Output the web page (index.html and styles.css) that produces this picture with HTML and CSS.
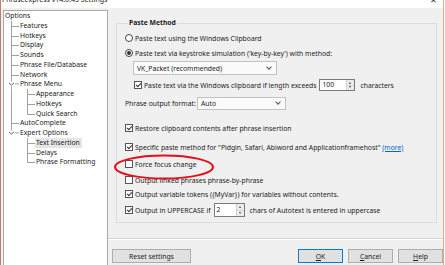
FILE: index.html
```html
<!DOCTYPE html>
<html lang="en">
  <head>
    <meta charset="UTF-8" />
    <title>PhraseExpress v14.0.45 Settings</title>
    <link rel="stylesheet" href="styles.css">
  </head>

  <body>
    <div class="window">
      <div class="titlebar">
        <span class="title">PhraseExpress v14.0.45 Settings</span>
        <span class="close">&#x2715;</span>
      </div>

      <div class="main">
        <div class="tree">
          <div class="node root">Options</div>
          <div class="node"><i class="g tee"></i>Features</div>
          <div class="node"><i class="g tee"></i>Hotkeys</div>
          <div class="node"><i class="g tee"></i>Display</div>
          <div class="node"><i class="g tee"></i>Sounds</div>
          <div class="node"><i class="g tee"></i>Phrase File/Database</div>
          <div class="node"><i class="g tee"></i>Network</div>
          <div class="node">
            <svg class="g" viewBox="0 0 16 10" preserveAspectRatio="none">
              <path d="M7.5 0V2.5M7.5 7.5V10M11 5H15" stroke="#a0a0a0" stroke-width="1" />
              <path d="M5 4L7.5 6.3L10 4" stroke="#4a4a4a" stroke-width="0.9" fill="none" />
            </svg>Phrase Menu
          </div>
          <div class="node"><i class="g pipe"></i><i class="g tee"></i>Appearance</div>
          <div class="node"><i class="g pipe"></i><i class="g tee"></i>Hotkeys</div>
          <div class="node"><i class="g pipe"></i><i class="g elbow"></i>Quick Search</div>
          <div class="node"><i class="g tee"></i>AutoComplete</div>
          <div class="node">
            <svg class="g" viewBox="0 0 16 10" preserveAspectRatio="none">
              <path d="M7.5 0V2.5M11 5H15" stroke="#a0a0a0" stroke-width="1" />
              <path d="M5 4L7.5 6.3L10 4" stroke="#4a4a4a" stroke-width="0.9" fill="none" />
            </svg>Expert Options
          </div>
          <div class="node"><i class="g"></i><i class="g tee"></i><span class="selected">Text Insertion</span></div>
          <div class="node"><i class="g"></i><i class="g tee"></i>Delays</div>
          <div class="node"><i class="g"></i><i class="g elbow"></i>Phrase Formatting</div>
        </div>

        <div class="pane">
          <fieldset class="group">
            <legend>Paste Method</legend>

            <div class="row first"><span class="radio"></span>Paste text using the Windows Clipboard</div>
            <div class="row gap3"><span class="radio on"></span>Paste text via keystroke simulation ('key-by-key') with method:</div>
            <div class="combo wide">VK_Packet (recommended)<span class="chev"></span></div>
            <div class="row gap4 indent">
              <span class="check on"></span>Paste text via the Windows clipboard if length exceeds
              <span class="spin long"><span class="spin-edit">100</span><span class="spin-btn"></span></span>
              <span class="after">characters</span>
            </div>
            <div class="row gap5 tall">
              <span class="label">Phrase output format:</span>
              <div class="combo narrow">Auto<span class="chev"></span></div>
            </div>
            <div class="row gap12"><span class="check on"></span>Restore clipboard contents after phrase insertion</div>
            <div class="row gap7"><span class="check on"></span>Specific paste method for "Pidgin, Safari, Abiword and Applicationframehost"&nbsp;<a href="#">(more)</a></div>
            <div class="row gap5"><span class="check"></span>Force focus change</div>
            <div class="row gap4"><span class="check"></span>Output linked phrases phrase-by-phrase</div>
            <div class="row gap2"><span class="check on"></span>Output variable tokens ({MyVar}) for variables without contents.</div>
            <div class="row gap3 tall">
              <span class="check on"></span>Output in UPPERCASE if
              <span class="spin short"><span class="spin-edit">2</span><span class="spin-btn"></span></span>
              <span class="after">chars of Autotext is entered in uppercase</span>
            </div>

            <svg class="mark" width="104" height="30" viewBox="0 0 104 30">
              <ellipse cx="52" cy="14" rx="49" ry="11.5" fill="none" stroke="#e3101c" stroke-width="2" />
            </svg>
          </fieldset>

          <div class="sep"></div>

          <div class="buttons">
            <button class="btn reset">Reset settings</button>
            <div class="btn-group">
              <button class="btn default"><u>O</u>K</button>
              <button class="btn"><u>C</u>ancel</button>
              <button class="btn"><u>H</u>elp</button>
            </div>
          </div>
        </div>
      </div>
    </div>
  </body>
</html>
```

FILE: styles.css
```css
body {
  margin: 0;
  font-family: "Noto Sans", sans-serif;
  font-size: 6.8px;
  color: #1b1b1b;
  background: #fff;
  overflow: hidden;
}

.window {
  width: 444px;
  height: 265px;
  box-sizing: border-box;
  border-left: 1px solid #b9806a;
  border-right: 1px solid #e6a888;
  background: #f0f0f0;
  display: flex;
  flex-direction: column;
}

.titlebar {
  height: 8px;
  flex: none;
  background: #fff;
  display: flex;
  justify-content: space-between;
  overflow: hidden;
}

.title {
  margin-top: -5px;
  padding-left: 1px;
  font-size: 7px;
  line-height: 10px;
}

.close {
  margin-top: -5px;
  margin-right: 6px;
  font-size: 8px;
  line-height: 10px;
  color: #333;
}

.main {
  flex: 1;
  display: flex;
  min-height: 0;
}

/* tree on the left */

.tree {
  width: 105px;
  flex: none;
  box-sizing: border-box;
  margin: 2px 0 0 2px;
  border: 1px solid #a9a9a9;
  border-bottom: none;
  background: #fff;
  padding-top: 0;
}

.node {
  display: flex;
  align-items: center;
  height: 9.75px;
  line-height: 9.75px;
  white-space: nowrap;
}

.node.root {
  padding-left: 1px;
}

.g {
  display: block;
  flex: none;
  width: 16px;
  height: 100%;
}

.g.pipe {
  background: linear-gradient(#a0a0a0, #a0a0a0) 7px 0 / 1px 100% no-repeat;
}

.g.tee {
  background:
    linear-gradient(#a0a0a0, #a0a0a0) 7px 0 / 1px 100% no-repeat,
    linear-gradient(#a0a0a0, #a0a0a0) 7px 5px / 8px 1px no-repeat;
}

.g.elbow {
  background:
    linear-gradient(#a0a0a0, #a0a0a0) 7px 0 / 1px 5px no-repeat,
    linear-gradient(#a0a0a0, #a0a0a0) 7px 5px / 8px 1px no-repeat;
}

.selected {
  background: #e5e5e5;
  padding: 0 2px 0 1px;
  margin-left: -1px;
}

/* right pane */

.pane {
  flex: 1;
  display: flex;
  flex-direction: column;
  min-width: 0;
}

.group {
  position: relative;
  margin: 10px 6px 0 8px;
  padding: 4px 0 5px 8px;
  border: 1px solid #dcdcdc;
}

.group legend {
  font-weight: bold;
  line-height: 10px;
  padding: 0 1px;
  margin-left: 3px;
}

.row {
  display: flex;
  align-items: center;
  height: 12px;
  white-space: nowrap;
}

.row.tall {
  height: 14px;
}

.row.indent {
  margin-left: 9px;
}

.gap2 { margin-top: 2px; }
.gap3 { margin-top: 3px; }
.gap4 { margin-top: 4px; }
.gap5 { margin-top: 5px; }
.gap7 { margin-top: 7px; }
.gap12 { margin-top: 12px; }

.radio,
.check {
  flex: none;
  box-sizing: border-box;
  width: 8px;
  height: 8px;
  margin-right: 2px;
  border: 1px solid #444;
  background: #fff;
}

.radio {
  border-radius: 50%;
  display: flex;
  align-items: center;
  justify-content: center;
}

.radio.on::after {
  content: "";
  width: 4px;
  height: 4px;
  border-radius: 50%;
  background: #333;
}

.check {
  border-color: #555;
}

.check.on {
  display: flex;
  align-items: center;
  justify-content: center;
}

.check.on::after {
  content: "";
  width: 4px;
  height: 2px;
  margin-top: -1px;
  border-left: 1px solid #333;
  border-bottom: 1px solid #333;
  transform: rotate(-45deg);
}

.combo {
  display: flex;
  align-items: center;
  justify-content: space-between;
  box-sizing: border-box;
  height: 14px;
  padding: 0 5px 0 3px;
  border: 1px solid #c2c2c2;
  background: #fbfbfb;
}

.combo.wide {
  width: 144px;
  margin: 2px 0 0 8px;
}

.combo.narrow {
  width: 89px;
  height: 13px;
}

.chev {
  width: 3px;
  height: 3px;
  margin-top: -2px;
  border-right: 1px solid #555;
  border-bottom: 1px solid #555;
  transform: rotate(45deg);
}

.label {
  width: 72px;
}

.spin {
  display: flex;
  box-sizing: border-box;
  height: 12px;
  margin-left: 3px;
  border: 1px solid #7a7a7a;
  background: #fff;
}

.row.tall .spin {
  height: 14px;
}

.spin.long {
  width: 36px;
}

.spin.short {
  width: 31px;
}

.spin-edit {
  flex: 1;
  padding-left: 2px;
  line-height: 10px;
}

.row.tall .spin-edit {
  line-height: 12px;
}

.spin-btn {
  width: 7px;
  border-left: 1px solid #d0d0d0;
  background:
    linear-gradient(#d6d6d6, #d6d6d6) 0 50% / 100% 1px no-repeat,
    #ececec;
  position: relative;
}

.spin-btn::before,
.spin-btn::after {
  content: "";
  position: absolute;
  left: 2px;
  border-left: 1.5px solid transparent;
  border-right: 1.5px solid transparent;
}

.spin-btn::before {
  top: 2px;
  border-bottom: 2px solid #444;
}

.spin-btn::after {
  bottom: 2px;
  border-top: 2px solid #444;
}

.after {
  margin-left: 5px;
}

a {
  color: #0066cc;
}

.mark {
  position: absolute;
  left: -5px;
  top: 125px;
}

/* bottom buttons */

.sep {
  margin-top: 15px;
  height: 1px;
  flex: none;
  background: #d5d5d5;
  border-bottom: 1px solid #fff;
}

.buttons {
  display: flex;
  justify-content: space-between;
  margin-top: 9px;
  padding-left: 4px;
}

.btn-group {
  display: flex;
  gap: 5px;
}

.btn {
  box-sizing: border-box;
  height: 14px;
  width: 45px;
  padding: 0;
  font-family: inherit;
  font-size: 6.8px;
  color: #1b1b1b;
  background: #e1e1e1;
  border: 1px solid #adadad;
}

.btn.reset {
  width: 79px;
}

.btn.default {
  border-color: #0078d7;
}
```
